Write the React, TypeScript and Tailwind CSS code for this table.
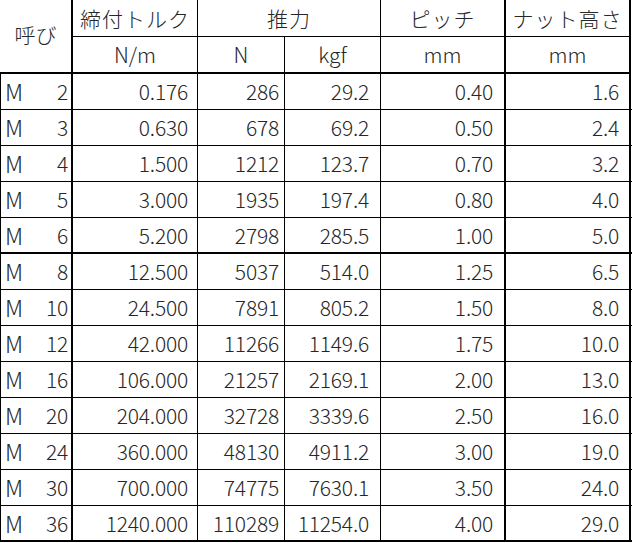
import React from "react";

const rows: [string, string, string, string, string, string][] = [
  ["2", "0.176", "286", "29.2", "0.40", "1.6"],
  ["3", "0.630", "678", "69.2", "0.50", "2.4"],
  ["4", "1.500", "1212", "123.7", "0.70", "3.2"],
  ["5", "3.000", "1935", "197.4", "0.80", "4.0"],
  ["6", "5.200", "2798", "285.5", "1.00", "5.0"],
  ["8", "12.500", "5037", "514.0", "1.25", "6.5"],
  ["10", "24.500", "7891", "805.2", "1.50", "8.0"],
  ["12", "42.000", "11266", "1149.6", "1.75", "10.0"],
  ["16", "106.000", "21257", "2169.1", "2.00", "13.0"],
  ["20", "204.000", "32728", "3339.6", "2.50", "16.0"],
  ["24", "360.000", "48130", "4911.2", "3.00", "19.0"],
  ["30", "700.000", "74775", "7630.1", "3.50", "24.0"],
  ["36", "1240.000", "110289", "11254.0", "4.00", "29.0"],
];

export default function App() {
  return (
    <div
      className="w-[632px] h-[543px] bg-white text-[#262626] text-[21px] font-light leading-none overflow-hidden"
      style={{ fontFamily: '"Noto Sans CJK JP", "Noto Sans", sans-serif' }}
    >
      <div className="grid grid-cols-[73px_125px_87px_96px_125px_125px] grid-rows-[37px_37px]">
        <div className="row-span-2 border-r-2 border-b-2 border-black flex items-center justify-center pb-[4px]">呼び</div>
        <div className="border-r border-b border-black flex items-center justify-center tracking-[1px]">締付トルク</div>
        <div className="col-span-2 border-r border-b border-black flex items-center justify-center tracking-[1px]">推力</div>
        <div className="border-r-2 border-b border-black flex items-center justify-center tracking-[1px]">ピッチ</div>
        <div className="border-r-2 border-b border-black flex items-center justify-center tracking-[1px]">ナット高さ</div>
        <div className="border-r border-b-2 border-black flex items-center justify-center">N/m</div>
        <div className="border-r border-b-2 border-black flex items-center justify-center">N</div>
        <div className="border-r border-b-2 border-black flex items-center justify-center">kgf</div>
        <div className="border-r-2 border-b-2 border-black flex items-center justify-center">mm</div>
        <div className="border-r-2 border-b-2 border-black flex items-center justify-center">mm</div>
      </div>
      {rows.map((r, i) => {
        const thick = i === 4 || i === rows.length - 1;
        const bb = thick ? "border-b-2" : "border-b";
        return (
          <div
            key={r[0]}
            className={`grid grid-cols-[73px_125px_87px_96px_125px_125px] h-[36px] ${bb} border-black tracking-[-0.2px]`}
          >
            <div className="border-l border-r-2 border-black flex items-center justify-between pl-[4px] pr-[3px]">
              <span className="text-[23px] font-extralight">M</span>
              <span>{r[0]}</span>
            </div>
            <div className="border-r border-black flex items-center justify-end pr-[9px]">{r[1]}</div>
            <div className="border-r border-black flex items-center justify-end pr-[5px]">{r[2]}</div>
            <div className="border-r border-black flex items-center justify-end pr-[11px]">{r[3]}</div>
            <div className="border-r-2 border-black flex items-center justify-end pr-[11px]">{r[4]}</div>
            <div className="border-r-2 border-black flex items-center justify-end pr-[10px]">{r[5]}</div>
          </div>
        );
      })}
    </div>
  );
}
